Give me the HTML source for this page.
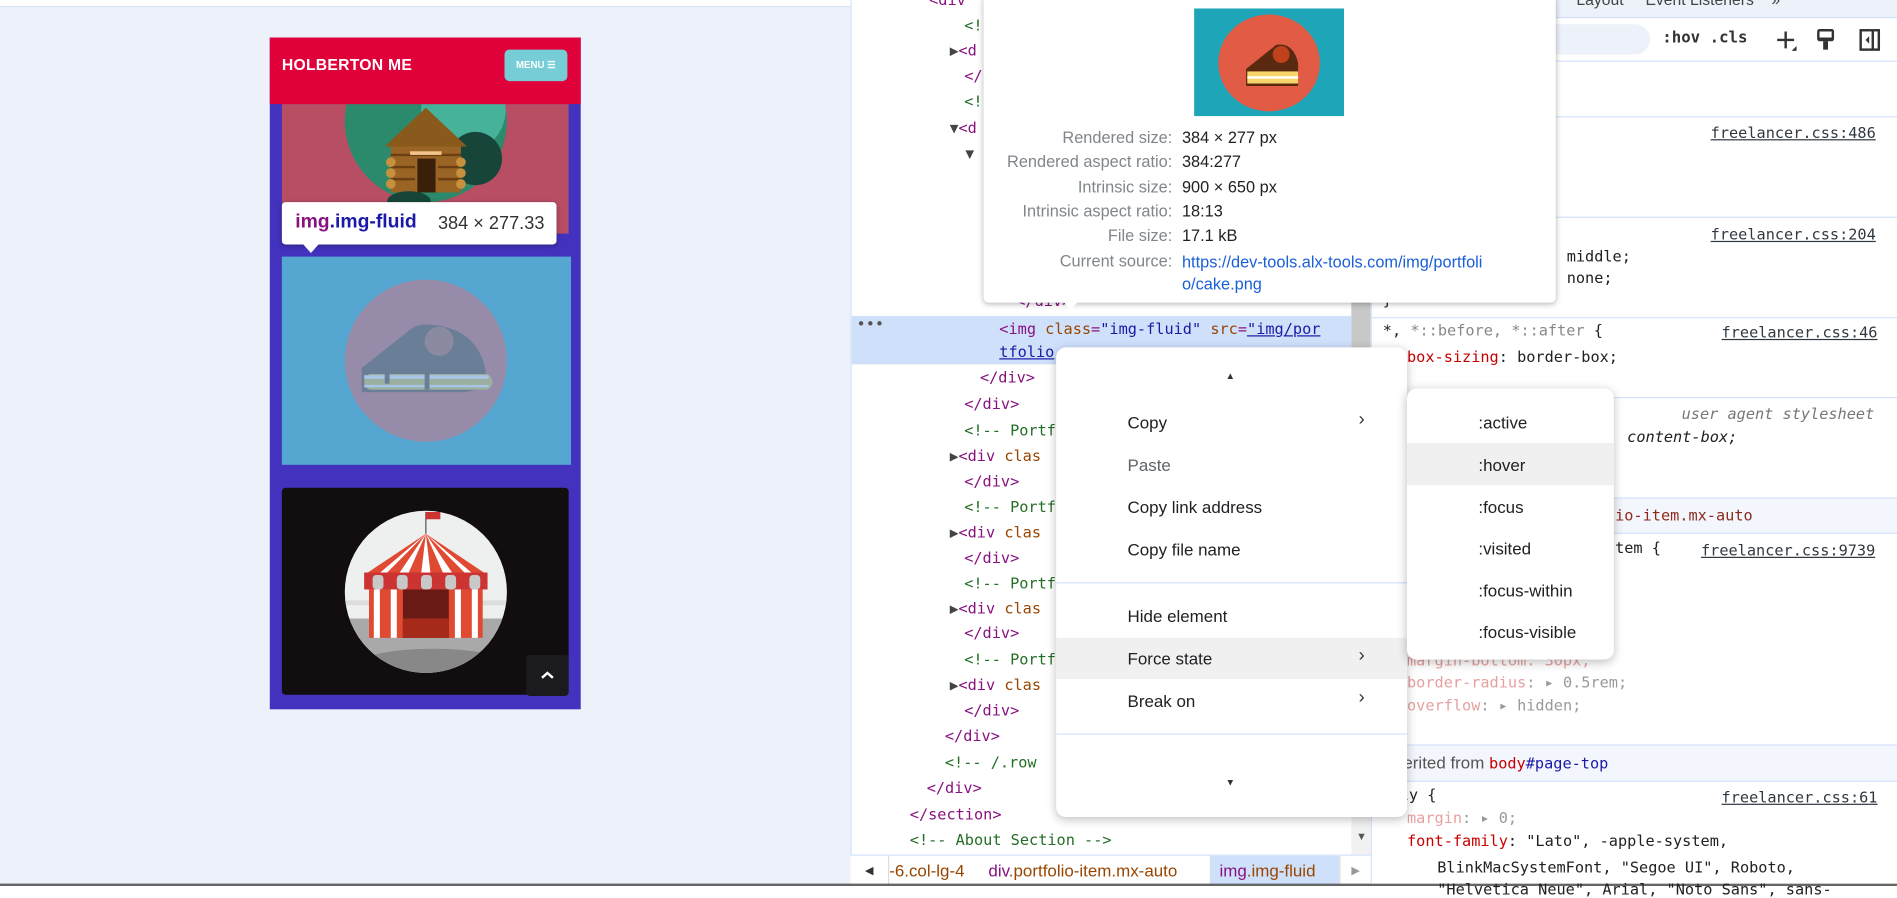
<!DOCTYPE html>
<html><head><meta charset="utf-8"><style>
*{box-sizing:border-box;margin:0;padding:0}
html,body{width:1897px;height:886px;overflow:hidden;background:#fff}
#w{position:absolute;left:0;top:0;width:1568px;height:732px;transform:scale(1.2098,1.2104);transform-origin:0 0;font-family:"Liberation Sans",sans-serif}
.a{position:absolute}
.m{font-family:"DejaVu Sans Mono","Liberation Mono",monospace;font-size:12.6px;white-space:pre;position:absolute;line-height:16px}
.t{color:#881280}.n{color:#994500}.v{color:#1a1aa6}.c{color:#236e25}
.tri{color:#444;font-size:12px}
.mi{position:absolute;left:932px;font-size:14px;color:#202124}
.si{position:absolute;left:1222px;font-size:14px;color:#202124}
.lab{position:absolute;right:599px;font-size:13.5px;color:#80868b;white-space:nowrap}
.val{position:absolute;left:977px;font-size:13.5px;color:#202124;white-space:nowrap}
.sl{position:absolute;left:1143px;font-family:"DejaVu Sans Mono",monospace;font-size:12.6px;white-space:pre;color:#202124}
.hr{position:absolute;left:1133px;width:435px;height:1px;background:#d3e3fd}
</style></head><body><div id="w">
<div class="a" style="left:0;top:0;width:703px;height:732px;background:#edf1f9"></div>
<div class="a" style="left:0;top:0;width:703px;height:6px;background:#fff;border-bottom:1px solid #d6e2f3"></div>
<div class="a" style="left:223px;top:31px;width:257px;height:555px;background:#4332bd"></div>
<!-- card1 -->
<div class="a" style="left:233px;top:86px;width:237px;height:107px;background:#b84e64;overflow:hidden">
<svg width="237" height="107" style="position:absolute;left:0;top:0"><circle cx="119" cy="14" r="67" fill="#2a8a6b"/><circle cx="150" cy="5" r="35" fill="#46b29a"/><circle cx="160" cy="45" r="22" fill="#17453a"/><polygon points="85,35 119,3 153,35" fill="#8a5a1c"/><rect x="90" y="35" width="58" height="38" fill="#9a6424"/><rect x="112" y="45" width="15" height="28" fill="#3a1f0a"/><g stroke="#6b3f12" stroke-width="2"><line x1="90" y1="42" x2="148" y2="42"/><line x1="90" y1="52" x2="110" y2="52"/><line x1="129" y1="52" x2="148" y2="52"/><line x1="90" y1="62" x2="110" y2="62"/><line x1="129" y1="62" x2="148" y2="62"/></g><rect x="106" y="39" width="26" height="3" fill="#f2c48a"/><circle cx="90" cy="48" r="4" fill="#c8903c"/><circle cx="90" cy="57" r="4" fill="#c8903c"/><circle cx="90" cy="66" r="4" fill="#c8903c"/><circle cx="148" cy="48" r="4" fill="#c8903c"/><circle cx="148" cy="57" r="4" fill="#c8903c"/><circle cx="148" cy="66" r="4" fill="#c8903c"/><ellipse cx="105" cy="80" rx="18" ry="8" fill="#17453a"/></svg></div>
<!-- card2 -->
<div class="a" style="left:233px;top:212px;width:239px;height:172px;background:#55a6d0">
<svg width="239" height="172" style="position:absolute;left:0;top:0"><circle cx="119" cy="86" r="67" fill="#968ba8"/><path d="M66 92 L104 62 Q110 56 120 56 Q160 58 168 92 Q172 110 150 112 L66 112 Z" fill="#6a7e98"/><rect x="68" y="97" width="106" height="13" rx="6" fill="#9bb0a0"/><rect x="68" y="98" width="103" height="3" fill="#a8c4e6"/><rect x="68" y="106" width="103" height="2" fill="#a8c4e6"/><rect x="85" y="90" width="4" height="15" fill="#6a7e98"/><rect x="118" y="90" width="4" height="20" fill="#6a7e98"/><circle cx="130" cy="70" r="12" fill="#8a8aa0"/></svg></div>
<!-- tooltip -->
<div class="a" style="left:233px;top:167px;width:227px;height:35px;background:#fff;border-radius:3px;box-shadow:0 1px 4px rgba(0,0,0,.3)"></div>
<div class="a" style="left:249px;top:200px;width:0;height:0;border-left:8px solid transparent;border-right:8px solid transparent;border-top:9px solid #fff"></div>
<div class="a" style="left:244px;top:175px;font-size:16px;font-weight:bold;color:#881280;white-space:nowrap">img<span style="color:#1a1aa6">.img-fluid</span></div>
<div class="a" style="left:362px;top:176px;font-size:15px;color:#333;white-space:nowrap">384 × 277.33</div>
<!-- card3 -->
<div class="a" style="left:233px;top:403px;width:237px;height:171px;background:#120e0f;border-radius:3px;overflow:hidden">
<svg width="237" height="171" style="position:absolute;left:0;top:0"><defs><clipPath id="cc"><circle cx="119" cy="86" r="67"/></clipPath></defs><circle cx="119" cy="86" r="67" fill="#eef0f0"/><g clip-path="url(#cc)"><rect x="40" y="108" width="160" height="50" fill="#a9a9a9"/><rect x="40" y="93" width="160" height="4" fill="#ddd"/><ellipse cx="125" cy="145" rx="60" ry="12" fill="#888"/></g><path d="M119 38 L68 72 L170 72 Z" fill="#e04a32"/><path d="M119 38 L96 72 L104 72 Z M119 38 L115 72 L123 72 Z M119 38 L134 72 L142 72 Z M119 38 L79 72 L85 72 Z M119 38 L153 72 L159 72 Z" fill="#fff"/><rect x="68" y="70" width="102" height="14" fill="#c33"/><g fill="#c8c8c8"><rect x="75" y="72" width="9" height="12" rx="3"/><rect x="95" y="72" width="9" height="12" rx="3"/><rect x="115" y="72" width="9" height="12" rx="3"/><rect x="135" y="72" width="9" height="12" rx="3"/><rect x="155" y="72" width="9" height="12" rx="3"/></g><rect x="72" y="84" width="94" height="40" fill="#e04a32"/><g fill="#fff"><rect x="76" y="84" width="5" height="40"/><rect x="90" y="84" width="5" height="40"/><rect x="143" y="84" width="5" height="40"/><rect x="157" y="84" width="5" height="40"/></g><rect x="100" y="84" width="38" height="40" fill="#6a1a14"/><rect x="100" y="108" width="38" height="16" fill="#a52a1a"/><line x1="119" y1="20" x2="119" y2="38" stroke="#555"/><rect x="119" y="20" width="12" height="6" fill="#c33"/></svg></div>
<div class="a" style="left:435px;top:541px;width:35px;height:34px;background:#1b1b1f;border-radius:3px"><svg width="35" height="34"><path d="M13 19 L17.5 15 L22 19" stroke="#fff" stroke-width="2" fill="none"/></svg></div>
<!-- header -->
<div class="a" style="left:223px;top:31px;width:257px;height:55px;background:#e0003a"></div>
<div class="a" style="left:233px;top:46px;font-size:13px;font-weight:bold;color:#fff;letter-spacing:.2px">HOLBERTON ME</div>
<div class="a" style="left:417px;top:41px;width:52px;height:26px;background:#76cdd6;border-radius:4px;color:#fff;font-size:8px;font-weight:bold;line-height:26px;text-align:center">MENU ☰</div>

<!-- devtools elements -->
<div class="a" style="left:703px;top:0;width:430px;height:706px;background:#fff;border-left:1px solid #d3e3fd"></div>
<div class="a" style="left:1117px;top:0;width:16px;height:706px;background:#f1f1f1"></div>
<div class="a" style="left:1117px;top:0;width:16px;height:290px;background:#c8c8c8"></div>
<div class="a" style="left:1121px;top:686px;font-size:9px;color:#555">▼</div>
<div class="a" style="left:704px;top:261px;width:413px;height:40px;background:#cfe0fb"></div>
<div class="m" style="left:708px;top:260px;color:#555">•••</div>
<div class="m" style="left:768px;top:-8px"><span class="t">&lt;div</span></div>
<div class="m" style="left:797px;top:13px"><span class="c">&lt;!</span></div>
<div class="m" style="left:785px;top:34px"><span class="tri">▶</span><span class="t">&lt;d</span></div>
<div class="m" style="left:797px;top:55px"><span class="t">&lt;/</span></div>
<div class="m" style="left:797px;top:76px"><span class="c">&lt;!</span></div>
<div class="m" style="left:785px;top:98px"><span class="tri">▼</span><span class="t">&lt;d</span></div>
<div class="m" style="left:798px;top:119px"><span class="tri">▼</span></div>
<div class="m" style="left:840px;top:241px"><span class="t">&lt;/div&gt;</span></div>
<div class="m" style="left:826px;top:264px"><span class="t">&lt;img </span><span class="n">class</span><span class="t">=</span><span class="v">"img-fluid"</span> <span class="n">src</span><span class="t">=</span><span class="v" style="text-decoration:underline">"img/por</span></div>
<div class="m" style="left:826px;top:283px"><span class="v" style="text-decoration:underline">tfolio</span></div>
<div class="m" style="left:810px;top:304px"><span class="t">&lt;/div&gt;</span></div>
<div class="m" style="left:797px;top:326px"><span class="t">&lt;/div&gt;</span></div>
<div class="m" style="left:797px;top:348px"><span class="c">&lt;!-- Portf</span></div>
<div class="m" style="left:785px;top:369px"><span class="tri">▶</span><span class="t">&lt;div </span><span class="n">clas</span></div>
<div class="m" style="left:797px;top:390px"><span class="t">&lt;/div&gt;</span></div>
<div class="m" style="left:797px;top:411px"><span class="c">&lt;!-- Portf</span></div>
<div class="m" style="left:785px;top:432px"><span class="tri">▶</span><span class="t">&lt;div </span><span class="n">clas</span></div>
<div class="m" style="left:797px;top:453px"><span class="t">&lt;/div&gt;</span></div>
<div class="m" style="left:797px;top:474px"><span class="c">&lt;!-- Portf</span></div>
<div class="m" style="left:785px;top:495px"><span class="tri">▶</span><span class="t">&lt;div </span><span class="n">clas</span></div>
<div class="m" style="left:797px;top:515px"><span class="t">&lt;/div&gt;</span></div>
<div class="m" style="left:797px;top:537px"><span class="c">&lt;!-- Portf</span></div>
<div class="m" style="left:785px;top:558px"><span class="tri">▶</span><span class="t">&lt;div </span><span class="n">clas</span></div>
<div class="m" style="left:797px;top:579px"><span class="t">&lt;/div&gt;</span></div>
<div class="m" style="left:781px;top:600px"><span class="t">&lt;/div&gt;</span></div>
<div class="m" style="left:781px;top:622px"><span class="c">&lt;!-- /.row</span></div>
<div class="m" style="left:766px;top:643px"><span class="t">&lt;/div&gt;</span></div>
<div class="m" style="left:752px;top:665px"><span class="t">&lt;/section&gt;</span></div>
<div class="m" style="left:752px;top:686px"><span class="c">&lt;!-- About Section --&gt;</span></div>
<!-- breadcrumb -->
<div class="a" style="left:703px;top:706px;width:430px;height:26px;background:#fff;border-top:1px solid #d3e3fd"></div>
<div class="a" style="left:703px;top:707px;width:32px;height:24px;border-right:1px solid #ddd;font-size:9px;color:#333;line-height:24px;text-align:center">◀</div>
<div class="a" style="left:1000px;top:707px;width:107px;height:24px;background:#cfe0fb"></div>
<div class="a" style="left:1107px;top:707px;width:26px;height:24px;border-left:1px solid #ddd;font-size:9px;color:#999;line-height:24px;text-align:center">▶</div>
<div class="a" style="left:735px;top:711px;font-size:14px;color:#994500;white-space:nowrap">-6.col-lg-4</div>
<div class="a" style="left:817px;top:711px;font-size:14px;color:#881280;white-space:nowrap">div<span style="color:#994500">.portfolio-item.mx-auto</span></div>
<div class="a" style="left:1008px;top:711px;font-size:14px;color:#881280;white-space:nowrap">img<span style="color:#994500">.img-fluid</span></div>
<div class="a" style="left:0;top:730px;width:1568px;height:2px;background:#666"></div>

<!-- styles pane -->
<div class="a" style="left:1133px;top:0;width:435px;height:730px;background:#fff;border-left:1px solid #d3e3fd"></div>
<div class="a" style="left:1133px;top:0;width:435px;height:14px;background:#edf1f9"></div>
<div class="a" style="left:1303px;top:-8px;font-size:13px;color:#444;white-space:nowrap">Layout&nbsp;&nbsp;&nbsp;&nbsp;&nbsp;Event Listeners&nbsp;&nbsp;&nbsp;&nbsp;»</div>
<div class="hr" style="top:14px"></div>
<div class="a" style="left:1134px;top:20px;width:230px;height:25px;background:#edf1f9;border-radius:0 13px 13px 0"></div>
<div class="a" style="left:1374px;top:24px;font-family:'DejaVu Sans Mono',monospace;font-size:13px;font-weight:bold;color:#333;white-space:pre">:hov .cls</div>
<svg class="a" style="left:1465px;top:21px" width="100" height="24"><path d="M4 12h14M11 5v14" stroke="#333" stroke-width="2"/><path d="M16 21l4-4v4z" fill="#333"/><rect x="38" y="4" width="12" height="8" rx="1" fill="none" stroke="#333" stroke-width="2"/><rect x="38" y="10" width="12" height="3" fill="#333"/><rect x="42" y="13" width="4" height="7" fill="#333"/><rect x="73" y="4" width="15" height="16" fill="none" stroke="#333" stroke-width="2"/><line x1="83" y1="4" x2="83" y2="20" stroke="#333" stroke-width="2"/><path d="M80 9l-3 3 3 3z" fill="#333"/></svg>
<div class="hr" style="top:50px"></div>
<div class="hr" style="top:96px"></div>
<div class="a" style="left:1414px;top:102px;font-family:'DejaVu Sans Mono',monospace;font-size:12.6px;color:#303942;text-decoration:underline">freelancer.css:486</div>
<div class="sl" style="top:119px">;</div>
<div class="hr" style="top:179px"></div>
<div class="a" style="left:1414px;top:186px;font-family:'DejaVu Sans Mono',monospace;font-size:12.6px;color:#303942;text-decoration:underline">freelancer.css:204</div>
<div class="sl" style="left:1295px;top:204px">middle;</div>
<div class="sl" style="left:1295px;top:222px">none;</div>
<div class="sl" style="top:240px">}</div>
<div class="hr" style="top:262px"></div>
<div class="sl" style="top:265px">*, <span style="color:#888">*::before, *::after</span> {</div>
<div class="a" style="left:1423px;top:267px;font-family:'DejaVu Sans Mono',monospace;font-size:12.6px;color:#303942;text-decoration:underline">freelancer.css:46</div>
<div class="sl" style="left:1163px;top:287px"><span style="color:#c80000">box-sizing</span>: border-box;</div>
<div class="hr" style="top:328px"></div>
<div class="sl" style="left:1390px;top:334px;font-style:italic;color:#777">user agent stylesheet</div>
<div class="sl" style="left:1345px;top:353px;font-style:italic">content-box;</div>
<div class="a" style="left:1133px;top:411px;width:435px;height:30px;background:#f3f6fc;border-top:1px solid #d3e3fd;border-bottom:1px solid #d3e3fd"></div>
<div class="sl" style="left:1335px;top:418px;color:#8b2a1a">io-item.mx-auto</div>
<div class="sl" style="left:1335px;top:445px">tem {</div>
<div class="a" style="left:1406px;top:447px;font-family:'DejaVu Sans Mono',monospace;font-size:12.6px;color:#303942;text-decoration:underline">freelancer.css:9739</div>
<div class="sl" style="left:1163px;top:538px;color:#e7a0a0">margin-bottom: 30px;</div>
<div class="sl" style="left:1163px;top:556px;color:#999"><span style="color:#e7a0a0">border-radius</span>: ▸ 0.5rem;</div>
<div class="sl" style="left:1163px;top:575px;color:#999"><span style="color:#e7a0a0">overflow</span>: ▸ hidden;</div>
<div class="a" style="left:1133px;top:615px;width:435px;height:31px;background:#f3f6fc;border-top:1px solid #d3e3fd;border-bottom:1px solid #d3e3fd"></div>
<div class="a" style="left:1160px;top:622px;font-size:14px;color:#555;white-space:nowrap">erited from <span style="font-family:'DejaVu Sans Mono',monospace;font-size:12.6px;color:#c80000">body<span style="color:#1a1aa6">#page-top</span></span></div>
<div class="sl" style="left:1157px;top:649px">ly {</div>
<div class="a" style="left:1423px;top:651px;font-family:'DejaVu Sans Mono',monospace;font-size:12.6px;color:#303942;text-decoration:underline">freelancer.css:61</div>
<div class="sl" style="left:1163px;top:668px;color:#999"><span style="color:#e7a0a0">margin</span>: ▸ 0;</div>
<div class="sl" style="left:1163px;top:687px"><span style="color:#c80000">font-family</span>: "Lato", -apple-system,</div>
<div class="sl" style="left:1188px;top:709px">BlinkMacSystemFont, "Segoe UI", Roboto,</div>
<div class="sl" style="left:1188px;top:727px">"Helvetica Neue", Arial, "Noto Sans", sans-</div>

<!-- image popup -->
<div class="a" style="left:813px;top:-4px;width:473px;height:254px;background:#fff;border-radius:4px;box-shadow:0 1px 5px rgba(0,0,0,.3)"></div>
<div class="a" style="left:877px;top:247px;width:0;height:0;border-left:8px solid transparent;border-right:8px solid transparent;border-top:9px solid #fff"></div>
<svg class="a" style="left:987px;top:7px" width="124" height="89"><rect width="124" height="89" fill="#1fa5b8"/><ellipse cx="62" cy="45" rx="42" ry="40" fill="#e25b45"/><path d="M43 64 L43 50 L68 30 Q82 28 86 45 L86 64 Z" fill="#5a2a10"/><rect x="44" y="52" width="42" height="10" fill="#f7d56b"/><rect x="44" y="56" width="42" height="2" fill="#fff"/><circle cx="72" cy="38" r="7" fill="#c0421c"/></svg>
<div class="lab" style="top:106px">Rendered size:</div><div class="val" style="top:106px">384 × 277 px</div>
<div class="lab" style="top:126px">Rendered aspect ratio:</div><div class="val" style="top:126px">384:277</div>
<div class="lab" style="top:147px">Intrinsic size:</div><div class="val" style="top:147px">900 × 650 px</div>
<div class="lab" style="top:167px">Intrinsic aspect ratio:</div><div class="val" style="top:167px">18:13</div>
<div class="lab" style="top:187px">File size:</div><div class="val" style="top:187px">17.1 kB</div>
<div class="lab" style="top:208px">Current source:</div><div class="val" style="top:208px;color:#1a5fd8;line-height:18px">https://dev-tools.alx-tools.com/img/portfoli<br>o/cake.png</div>

<!-- context menu -->
<div class="a" style="left:873px;top:287px;width:290px;height:388px;background:#fff;border-radius:8px;box-shadow:0 2px 8px rgba(0,0,0,.25)"></div>
<div class="a" style="left:1013px;top:306px;font-size:8px;color:#333">▲</div>
<div class="mi" style="top:341px">Copy</div><div class="a" style="left:1123px;top:338px;font-size:15px;color:#333">›</div>
<div class="mi" style="top:376px;color:#5f6368">Paste</div>
<div class="mi" style="top:411px">Copy link address</div>
<div class="mi" style="top:446px">Copy file name</div>
<div class="a" style="left:873px;top:481px;width:290px;height:1px;background:#d3e3fd"></div>
<div class="mi" style="top:501px">Hide element</div>
<div class="a" style="left:873px;top:527px;width:290px;height:34px;background:#f0f0f0"></div>
<div class="mi" style="top:536px">Force state</div><div class="a" style="left:1123px;top:533px;font-size:15px;color:#333">›</div>
<div class="mi" style="top:571px">Break on</div><div class="a" style="left:1123px;top:568px;font-size:15px;color:#333">›</div>
<div class="a" style="left:873px;top:606px;width:290px;height:1px;background:#d3e3fd"></div>
<div class="a" style="left:1013px;top:642px;font-size:8px;color:#333">▼</div>
<!-- submenu -->
<div class="a" style="left:1163px;top:321px;width:171px;height:224px;background:#fff;border-radius:8px;box-shadow:0 2px 8px rgba(0,0,0,.25)"></div>
<div class="a" style="left:1163px;top:366px;width:171px;height:35px;background:#f0f0f0"></div>
<div class="si" style="top:341px">:active</div>
<div class="si" style="top:376px">:hover</div>
<div class="si" style="top:411px">:focus</div>
<div class="si" style="top:445px">:visited</div>
<div class="si" style="top:480px">:focus-within</div>
<div class="si" style="top:514px">:focus-visible</div>
</div></body></html>
